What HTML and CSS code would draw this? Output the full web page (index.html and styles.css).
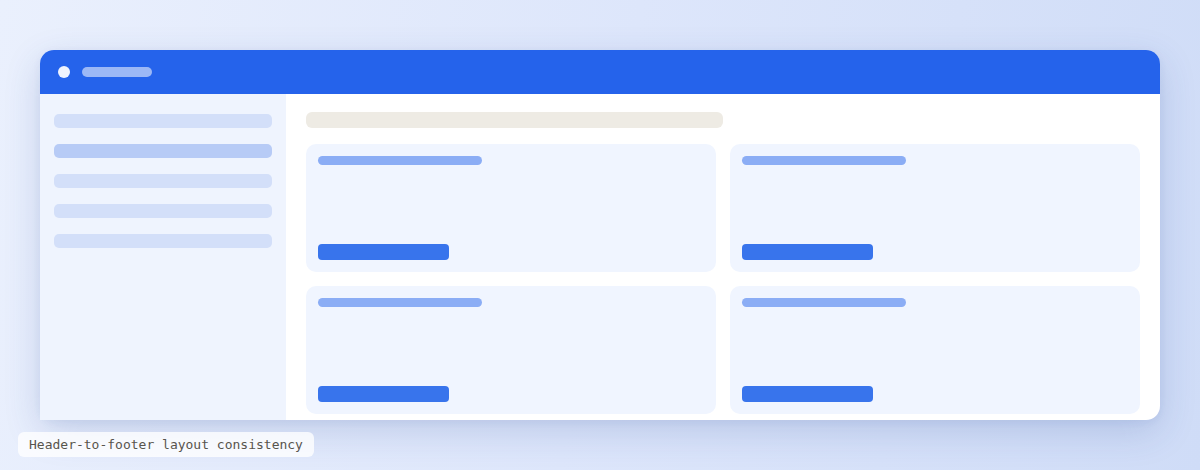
FILE: index.html
```html
<!DOCTYPE html>
<html>
<head>
<meta charset="utf-8">
<link rel="stylesheet" href="styles.css">
</head>
<body>
<div class="stage">
  <div class="window">
    <div class="header">
      <span class="dot"></span>
      <span class="title-pill"></span>
    </div>
    <div class="body">
      <aside class="sidebar">
        <div class="nav-item"></div>
        <div class="nav-item active"></div>
        <div class="nav-item"></div>
        <div class="nav-item"></div>
        <div class="nav-item"></div>
      </aside>
      <main class="main">
        <div class="top-bar"></div>
        <div class="grid">
          <div class="card"><div class="card-title"></div><div class="card-btn"></div></div>
          <div class="card"><div class="card-title"></div><div class="card-btn"></div></div>
          <div class="card"><div class="card-title"></div><div class="card-btn"></div></div>
          <div class="card"><div class="card-title"></div><div class="card-btn"></div></div>
        </div>
      </main>
    </div>
  </div>
  <div class="caption">Header-to-footer layout consistency</div>
</div>
</body>
</html>
```
FILE: styles.css
```css
html, body {
  margin: 0;
  padding: 0;
}
body {
  width: 1200px;
  height: 470px;
  overflow: hidden;
  background: linear-gradient(100deg, #eaf0fd 0%, #dde6fb 50%, #cfdcf7 100%);
  font-family: "DejaVu Sans Mono", "Liberation Mono", monospace;
}
.stage {
  padding: 50px 0 0 18px;
  display: flex;
  flex-direction: column;
  align-items: flex-start;
}
.window {
  margin-left: 22px;
  width: 1120px;
  height: 370px;
  background: #ffffff;
  border-radius: 14px;
  box-shadow: 0 12px 36px rgba(40, 70, 150, 0.18), 0 2px 8px rgba(40, 70, 150, 0.06);
  display: flex;
  flex-direction: column;
}
.header {
  height: 44px;
  flex: none;
  background: #2563eb;
  border-radius: 14px 14px 0 0;
  display: flex;
  align-items: center;
  padding-left: 18px;
  gap: 12px;
}
.dot {
  width: 12px;
  height: 12px;
  border-radius: 50%;
  background: #eef3fe;
}
.title-pill {
  width: 70px;
  height: 10px;
  border-radius: 5px;
  background: rgba(255, 255, 255, 0.55);
}
.body {
  flex: 1;
  display: flex;
  min-height: 0;
}
.sidebar {
  width: 22%;
  flex: none;
  box-sizing: border-box;
  background: #eff4fe;
  padding: 20px 14px;
  display: flex;
  flex-direction: column;
  gap: 16px;
}
.nav-item {
  height: 14px;
  border-radius: 5px;
  background: #d3dff9;
}
.nav-item.active {
  background: #b7cbf6;
}
.main {
  flex: 1;
  padding: 18px 20px 0 20px;
  display: flex;
  flex-direction: column;
  gap: 16px;
  overflow: hidden;
}
.top-bar {
  width: 50%;
  height: 16px;
  border-radius: 6px;
  background: #eeebe4;
}
.grid {
  display: grid;
  grid-template-columns: 1fr 1fr;
  grid-auto-rows: 128px;
  gap: 14px;
}
.card {
  background: #f0f5ff;
  border-radius: 10px;
  padding: 12px;
  display: flex;
  flex-direction: column;
  justify-content: space-between;
}
.card-title {
  width: 164px;
  height: 9px;
  border-radius: 5px;
  background: #8badf5;
}
.card-btn {
  width: 131px;
  height: 16px;
  border-radius: 4px;
  background: #3874ec;
}
.caption {
  margin-top: 12px;
  padding: 5px 11px;
  font-size: 13px;
  line-height: 15px;
  color: #57544d;
  background: rgba(255, 255, 255, 0.78);
  border-radius: 6px;
}
```
